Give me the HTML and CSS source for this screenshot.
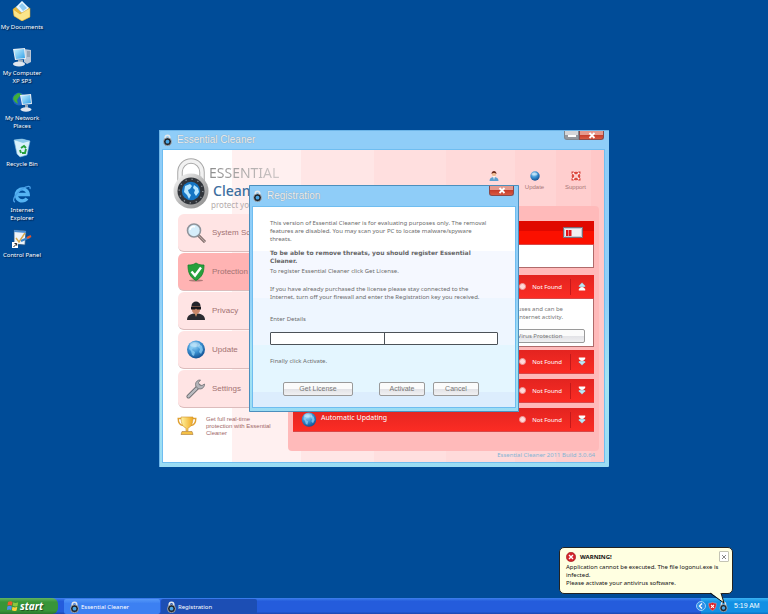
FILE: index.html
```html
<!DOCTYPE html>
<html lang="en">
<head>
<meta charset="utf-8">
<title>Desktop</title>
<link rel="stylesheet" href="styles.css">
</head>
<body>
<svg class="defs" aria-hidden="true">
  <defs>
    <linearGradient id="steel" x1="0" y1="0" x2="1" y2="1">
      <stop offset="0" stop-color="#fdfdfd"/><stop offset=".5" stop-color="#b9b9b9"/><stop offset="1" stop-color="#8a8a8a"/>
    </linearGradient>
    <radialGradient id="ball" cx=".4" cy=".3" r=".75">
      <stop offset="0" stop-color="#9fd8f8"/><stop offset=".5" stop-color="#3a8fd0"/><stop offset="1" stop-color="#0d4a8c"/>
    </radialGradient>
    <linearGradient id="screen" x1="0" y1="0" x2="1" y2="1">
      <stop offset="0" stop-color="#c8f2ff"/><stop offset="1" stop-color="#2f9fe8"/>
    </linearGradient>
    <linearGradient id="gold" x1="0" y1="0" x2="1" y2="0">
      <stop offset="0" stop-color="#fff3a0"/><stop offset="1" stop-color="#f0a820"/>
    </linearGradient>
    <symbol id="lock" viewBox="0 0 36 52">
      <path d="M7 28V14a11 11 0 0 1 22 0v14" fill="none" stroke="#a8a8a8" stroke-width="5.5"/>
      <path d="M7 28V14a11 11 0 0 1 22 0v14" fill="none" stroke="#f1f1f1" stroke-width="3.5"/>
      <circle cx="18" cy="33" r="17.5" fill="url(#steel)"/>
      <circle cx="18" cy="33" r="13.5" fill="#30343a"/>
      <circle cx="18" cy="33" r="11.8" fill="none" stroke="#8b9096" stroke-width="1.4" stroke-dasharray="1.2 5"/>
      <circle cx="18" cy="33" r="9.2" fill="#1676c4"/>
      <path d="M12 28l5-2 2 2-2 3-2 1 1 3 2 2-2 4-2-4-3-3zM21 27l4 3 1 4-3 4-2-3 1-3-2-2z" fill="#b5e6ff"/>
    </symbol>
    <symbol id="lock-small" viewBox="0 0 9 12">
      <path d="M2.200 6V3.500a2.300 2.300 0 0 1 4.600 0V6" fill="none" stroke="#e4e8ec" stroke-width="1.500"/>
      <circle cx="4.500" cy="7.700" r="4" fill="#20262e" stroke="#b9bec4" stroke-width=".8"/>
      <circle cx="4.500" cy="7.700" r="1.900" fill="#4aa6e6"/>
    </symbol>
    <symbol id="globe" viewBox="0 0 20 20">
      <circle cx="10" cy="9.500" r="9" fill="url(#ball)"/>
      <path d="M4 5l4-2 3 1-1 3-3 1-1 2 3 2-1 4-2-1-1-4-2-2zM13 4l3 2 1 4-2 4-2-2 1-3-2-2z" fill="#8fd0f5" opacity=".75"/>
      <ellipse cx="9" cy="4.500" rx="5" ry="2.500" fill="#fff" opacity=".35"/>
    </symbol>
    <symbol id="down" viewBox="0 0 10 10">
      <path d="M1 0h8v2L5 5.500 1 2z" fill="#fff"/><path d="M1 4.500h8v1.500L5 10 1 6z" fill="#b9e9f8" stroke="#8c3434" stroke-width=".3"/>
    </symbol>
    <symbol id="shield-x" viewBox="0 0 12 12">
      <path d="M6 .5c2 1 3.500 1 5 1 0 5-1 8-5 10C2 9.500 1 6.500 1 1.500c1.500 0 3 0 5-1z" fill="#d91f26" stroke="#f5b5b5" stroke-width=".6"/>
      <path d="M4 3.800l4 4M8 3.800l-4 4" stroke="#fff" stroke-width="1.500"/>
    </symbol>
  </defs>
</svg>

<main class="desktop">
  <nav class="shortcuts" aria-label="Desktop shortcuts">
    <a class="shortcut" href="#documents">
      <svg class="shortcut-icon" viewBox="0 0 20 20"><path d="M1 8l4-3 12 1 1 10-8 4-8-5z" fill="#e8b93c"/><path d="M4 6l6-6 7 7-5 7z" fill="#e9f6ff" stroke="#8dbbe0" stroke-width=".5"/><path d="M7 5l3-3 5 5-4 3z" fill="#8fcbf2"/><path d="M1 8l7 5 10-6v9l-8 4-8-5z" fill="#fbe58a" stroke="#d59c24" stroke-width=".5"/></svg>
      <span>My Documents</span>
    </a>
    <a class="shortcut" href="#computer">
      <svg class="shortcut-icon" viewBox="0 0 20 20"><path d="M12 2l7 1v12l-4 2-3-2z" fill="#b9c6d6"/><path d="M15 5h3M15 7h3M15 9h3" stroke="#5d7186" stroke-width=".8"/><path d="M1 2l12-1 1 11-11 1z" fill="#e8edf3"/><path d="M2 3l10-1 1 9-9 1z" fill="url(#screen)"/><path d="M6 13h5v2H6z" fill="#9aa9b8"/><ellipse cx="7" cy="17" rx="6" ry="2.500" fill="#dfe6ee"/></svg>
      <span>My Computer<br>XP SP3</span>
    </a>
    <a class="shortcut" href="#network">
      <svg class="shortcut-icon" viewBox="0 0 20 20"><circle cx="7" cy="7" r="6.500" fill="#1e62c0"/><path d="M2 4l4-3 4 1-3 3-2 3 1 4-3-2-2-3z" fill="#3fae3a"/><path d="M8 3l11-1 1 10-10 1z" fill="#e8edf3"/><path d="M9 4l9-1 1 8-8 1z" fill="url(#screen)"/><path d="M13 13h3v3h-3z" fill="#9aa9b8"/><ellipse cx="14" cy="17.500" rx="5.500" ry="2.200" fill="#dfe6ee"/></svg>
      <span>My Network<br>Places</span>
    </a>
    <a class="shortcut" href="#recycle">
      <svg class="shortcut-icon" viewBox="0 0 20 20"><path d="M2 2l8-1 8 2-3 14-7 2-3-3z" fill="#d9f1fb" stroke="#7cb6dc" stroke-width=".6"/><path d="M2 2l8-1 8 2-7 2z" fill="#8cc8ea"/><path d="M9 10l3-2 2 2M14 11l-1 4-3 0M9 15l-1-3" fill="none" stroke="#26a03a" stroke-width="1.900"/></svg>
      <span>Recycle Bin</span>
    </a>
    <a class="shortcut" href="#internet">
      <svg class="shortcut-icon" viewBox="0 0 20 20"><path d="M15 14.500A6 6 0 1 1 16.200 10.500H5" fill="none" stroke="#55b4f3" stroke-width="3.400"/><path d="M3 18c-4-1 1-9 7-13 5-3 9-4 8 0" fill="none" stroke="#4aa0e8" stroke-width="1.300"/></svg>
      <span>Internet<br>Explorer</span>
    </a>
    <a class="shortcut" href="#control">
      <svg class="shortcut-icon" viewBox="0 0 20 20"><path d="M2 1l12 1-1 14-11-1z" fill="#eef4fa" stroke="#27547f" stroke-width=".8"/><path d="M2 1l12 1v2L2 3z" fill="#4c8fd4"/><path d="M4 9l3 4 6-9" fill="none" stroke="#d9a94c" stroke-width="1.400"/><path d="M9 12l9-4" stroke="#3a83c8" stroke-width="2"/><path d="M15 9l4-2" stroke="#e0552c" stroke-width="2"/><path d="M0 13h6v6H0z" fill="#fff"/><path d="M1.500 18l3-3M2.500 14.500h2.200v2.200" fill="none" stroke="#111" stroke-width=".9"/></svg>
      <span>Control Panel</span>
    </a>
  </nav>

  <section class="window app-window" aria-label="Essential Cleaner">
    <header class="titlebar">
      <svg class="title-icon"><use href="#lock-small"/></svg>
      <h1 class="title">Essential Cleaner</h1>
      <div class="caption-buttons">
        <button class="caption minimize" aria-label="Minimize"><svg viewBox="0 0 14 9"><path d="M3 4h8v2H3z" fill="#fff"/></svg></button>
        <button class="caption close" aria-label="Close"><svg viewBox="0 0 14 9"><path d="M4.500 2l5 5M9.500 2l-5 5" stroke="#fff" stroke-width="1.800"/></svg></button>
      </div>
    </header>
    <div class="client app-client">
      <header class="app-header">
        <div class="brand">
          <svg class="brand-lock"><use href="#lock"/></svg>
          <div class="brand-text">
            <div class="brand-top">ESSENTIAL</div>
            <div class="brand-name">Cleaner</div>
            <div class="brand-tag">protect your</div>
          </div>
        </div>
        <nav class="tools" aria-label="Tools">
          <a class="tool" href="#register" aria-label="Register">
            <svg class="tool-icon" viewBox="0 0 10 10"><path d="M.5 10c0-3 2-4 4.500-4s4.500 1 4.500 4z" fill="#5ba0cf"/><path d="M4 5h2l-1 4z" fill="#fff"/><circle cx="5" cy="3" r="2.200" fill="#f0bd94"/><path d="M2.500 3c0-4 5-4 5 0-1-1.500-4-1.500-5 0z" fill="#6d2b1c"/></svg>
          </a>
          <a class="tool" href="#update"><svg class="tool-icon" viewBox="0 0 10 10"><circle cx="5" cy="5" r="4.700" fill="url(#ball)"/><ellipse cx="4.500" cy="3" rx="3" ry="1.600" fill="#fff" opacity=".45"/></svg><span>Update</span></a>
          <a class="tool" href="#support"><svg class="tool-icon" viewBox="0 0 10 10"><path d="M.5.5h2.500l-2.500 2.500zM9.500.5v2.500L7 .5zM.5 9.500V7L3 9.500zM9.500 9.500H7L9.500 7z" fill="#d8433a"/><circle cx="5" cy="5" r="3.200" fill="none" stroke="#dc4a40" stroke-width="2.200"/><path d="M2 2l1.600 1.600M8 2L6.400 3.600M2 8l1.600-1.600M8 8L6.400 6.400" stroke="#fff" stroke-width="1.300"/></svg><span>Support</span></a>
        </nav>
      </header>
      <div class="app-body">
        <aside class="sidebar">
          <nav class="menu" aria-label="Sections">
            <a class="menu-item" href="#scan"><svg class="menu-icon" viewBox="0 0 20 20"><path d="M12 12l7 7" stroke="#6d5a58" stroke-width="3"/><path d="M12 12l7 7" stroke="#b8a6a4" stroke-width="1.200"/><circle cx="8" cy="7.500" r="6.500" fill="#d6eefb" stroke="#8f949b" stroke-width="1.600"/><path d="M4 7c0-3 3-4 5-3" stroke="#fff" stroke-width="1.500" fill="none"/></svg><span>System Scan</span></a>
            <a class="menu-item active" href="#protection"><svg class="menu-icon" viewBox="0 0 20 20"><ellipse cx="10" cy="18.500" rx="7" ry="1" fill="#b07a78"/><path d="M10 1c3 2 5 2 8 2 0 8-2 12-8 15.500C4 15 2 11 2 3c3 0 5 0 8-2z" fill="#27a03c" stroke="#14802a" stroke-width=".8"/><path d="M5.500 9.500l3.500 4 6-8" fill="none" stroke="#fff" stroke-width="2.400"/></svg><span>Protection</span></a>
            <a class="menu-item" href="#privacy"><svg class="menu-icon" viewBox="0 0 20 20"><path d="M1 19c0-5 4-6.500 9-6.500s9 1.500 9 6.500z" fill="#2b2b30"/><path d="M8 11h4l-2 5z" fill="#c98d63"/><path d="M6 4h8v5c0 5-8 5-8 0z" fill="#c9876a"/><path d="M5.500 5c0-6 9-6 9 0z" fill="#23232a"/><path d="M5 5.500h10v3h-4l-1-1-1 1H5z" fill="#16161b"/></svg><span>Privacy</span></a>
            <a class="menu-item" href="#updates"><svg class="menu-icon"><use href="#globe"/></svg><span>Update</span></a>
            <a class="menu-item" href="#settings"><svg class="menu-icon" viewBox="0 0 20 20"><path d="M2.500 17.500L13 7" stroke="#6e6e72" stroke-width="4" stroke-linecap="round"/><path d="M2.500 17.500L13 7" stroke="#bcbcc0" stroke-width="2.400" stroke-linecap="round"/><path d="M18.500 5a4.500 4.500 0 1 1-4-4l-2 2.500 1 2.500 2.500.5z" fill="#b4b4b9" stroke="#6e6e72" stroke-width=".8"/></svg><span>Settings</span></a>
          </nav>
          <p class="promo">
            <svg class="promo-icon" viewBox="0 0 20 20"><path d="M4 2.500H1.200c0 4 1.500 6.500 5 7M16 2.500h2.800c0 4-1.500 6.500-5 7" fill="none" stroke="#e0a030" stroke-width="1.400"/><path d="M4 1h12c0 7-2 10-5 11v3H9v-3C6 11 4 8 4 1z" fill="url(#gold)" stroke="#d09028" stroke-width=".6"/><path d="M5 15.500h10l1 3H4z" fill="#f5c044" stroke="#a87838" stroke-width=".6"/></svg>
            <span>Get full real-time<br>protection with Essential<br>Cleaner</span>
          </p>
        </aside>
        <section class="panel" aria-label="Protection status">
          <article class="card summary">
            <div class="card-head"><svg class="gauge" viewBox="0 0 20 11"><path d="M.5.5h19v10H.5z" fill="#fff" stroke="#7c6d78"/><path d="M1.500 1.500h17v8h-17z" fill="#f2eef1" stroke="#c2cdd6"/><path d="M3 3h2.500v6H3zM6 3h2.500v6H6z" fill="#e3131a"/></svg></div>
            <div class="card-body"></div>
          </article>
          <article class="card open">
            <div class="card-head"><span class="status"><i class="dot"></i>Not Found</span><button class="toggle" aria-label="Collapse"><svg class="flip"><use href="#down"/></svg></button></div>
            <div class="card-body detail">
              <p>viruses and can be<br>Internet activity.</p>
              <button class="btn detail-button">Virus Protection</button>
            </div>
          </article>
          <article class="card"><div class="card-head"><span class="status"><i class="dot"></i>Not Found</span><button class="toggle" aria-label="Expand"><svg><use href="#down"/></svg></button></div></article>
          <article class="card"><div class="card-head"><span class="status"><i class="dot"></i>Not Found</span><button class="toggle" aria-label="Expand"><svg><use href="#down"/></svg></button></div></article>
          <article class="card"><div class="card-head"><svg class="head-icon"><use href="#globe"/></svg><h2 class="head-title">Automatic Updating</h2><span class="status"><i class="dot"></i>Not Found</span><button class="toggle" aria-label="Expand"><svg><use href="#down"/></svg></button></div></article>
        </section>
      </div>
      <footer class="build">Essential Cleaner 2011 Build 3.0.64</footer>
    </div>
  </section>

  <section class="window dialog" role="dialog" aria-label="Registration">
    <header class="titlebar">
      <svg class="title-icon"><use href="#lock-small"/></svg>
      <h1 class="title">Registration</h1>
      <div class="caption-buttons">
        <button class="caption close" aria-label="Close dialog"><svg viewBox="0 0 14 9"><path d="M4.500 2l5 5M9.500 2l-5 5" stroke="#fff" stroke-width="1.800"/></svg></button>
      </div>
    </header>
    <form class="client dialog-client">
      <p>This version of Essential Cleaner is for evaluating purposes only. The removal<br>features are disabled. You may scan your PC to locate malware/spyware<br>threats.</p>
      <p class="strong">To be able to remove threats, you should register Essential<br>Cleaner.</p>
      <p class="follow">To register Essential Cleaner click Get License.</p>
      <p class="wide-gap">If you have already purchased the license please stay connected to the<br>Internet, turn off your firewall and enter the Registration key you received.</p>
      <label class="details-label" for="name">Enter Details</label>
      <div class="fields">
        <input id="name" type="text">
        <input type="text" aria-label="Registration key">
      </div>
      <p class="final">Finally click Activate.</p>
      <div class="actions">
        <button class="btn license" type="button">Get License</button>
        <button class="btn small" type="button">Activate</button>
        <button class="btn small" type="button">Cancel</button>
      </div>
    </form>
  </section>

  <aside class="balloon" role="alert">
    <div class="balloon-head">
      <svg class="balloon-icon" viewBox="0 0 10 10"><circle cx="5" cy="5" r="4.700" fill="#d3232a" stroke="#8d1015" stroke-width=".5"/><path d="M3 3l4 4M7 3L3 7" stroke="#fff" stroke-width="1.400"/></svg>
      <strong>WARNING!</strong>
      <button class="balloon-close" aria-label="Dismiss"><svg viewBox="0 0 10 10"><path d="M2.500 2.500l5 5M7.500 2.500l-5 5" stroke="#777" stroke-width="1.100"/></svg></button>
    </div>
    <p>Application cannot be executed. The file logonui.exe is<br>infected.<br>Please activate your antivirus software.</p>
    <svg class="tail" viewBox="0 0 16 12"><path d="M1 0L15 11 12 0z" fill="#ffffe1"/><path d="M1 1L15 11 12 1" fill="none" stroke="#111" stroke-width="1"/></svg>
  </aside>
</main>

<footer class="taskbar">
  <button class="start"><svg class="flag" viewBox="0 0 12 12"><path d="M1 2c2-1 3-1 4.500 0L5 5.500C3.500 4.800 2.500 4.800.5 5.500z" fill="#ee5a2c"/><path d="M6.200 2.300c1.500.8 3 .8 5 0L10.500 6c-2 .8-3 .6-4.800-.3z" fill="#8cc63e"/><path d="M.3 6.500c2-1 3-1 4.500 0L4.200 10C2.700 9.200 1.700 9.300 0 10z" fill="#4d8df0"/><path d="M5.500 6.800c1.500.8 3 .8 4.800 0L9.600 10.400c-2 .8-3 .6-4.700-.2z" fill="#fccf3a"/></svg><span>start</span></button>
  <div class="tasks">
    <button class="task"><svg class="task-icon"><use href="#lock-small"/></svg>Essential Cleaner</button>
    <button class="task pressed"><svg class="task-icon"><use href="#lock-small"/></svg>Registration</button>
  </div>
  <div class="tray">
    <button class="tray-more" aria-label="Show hidden icons"><svg viewBox="0 0 8 8"><path d="M5 1.500L2.500 4 5 6.500" fill="none" stroke="#fff" stroke-width="1.300"/></svg></button>
    <svg class="tray-icon"><use href="#shield-x"/></svg>
    <svg class="tray-icon"><use href="#lock-small"/></svg>
    <time>5:19 AM</time>
  </div>
</footer>
</body>
</html>
```
FILE: styles.css
```css
:root {
  --ui: "Noto Sans", "Open Sans", sans-serif;
  --plain: "Liberation Sans", Arial, sans-serif;
}

* { box-sizing: border-box; }

body {
  margin: 0;
  height: 100vh;
  display: flex;
  flex-direction: column;
  overflow: hidden;
  background: #004c98;
  font: 6px/8px var(--ui);
  color: #777;
}

h1, h2, p { margin: 0; font: inherit; }
a { color: inherit; text-decoration: none; }
button { margin: 0; padding: 0; border: 0; font: inherit; color: inherit; background: none; }
svg { display: block; flex: none; }
.defs { position: absolute; width: 0; height: 0; }

/* Desktop */
.desktop { position: relative; z-index: 1; flex: 1; min-height: 0; }
.shortcuts { display: grid; grid-auto-rows: 1fr; width: 44px; height: 274px; }
.shortcut {
  display: flex;
  flex-direction: column;
  align-items: center;
  gap: 2px;
  padding-top: 1px;
  color: #fff;
  text-align: center;
  white-space: nowrap;
  text-shadow: 1px 1px 1px #001c40;
}
.shortcut-icon { width: 20px; height: 20px; }

/* Windows */
.window {
  position: absolute;
  padding: 0 4px 5px;
  display: flex;
  flex-direction: column;
  background: linear-gradient(#8fcdf8 0 10%, #92d0f7 50%, #a5e4f2 75%, #9adcf4);
  border-radius: 1px;
}
.app-window { left: 159px; top: 130px; width: 450px; padding-right: 5px; box-shadow: inset 1px 1px #6db5e8; }
.dialog { left: 249px; top: 185px; width: 270px; box-shadow: inset 0 0 0 1px #4c8fbd; }
.titlebar { display: flex; align-items: center; height: 20px; flex: none; }
.dialog .titlebar { height: 22px; }
.title-icon { width: 9px; height: 12px; }
.title {
  flex: 1;
  padding-left: 5px;
  font: 10px/18px var(--plain);
  color: #eceff2;
  text-shadow: 0 0 1px #75838f;
}
.caption-buttons { display: flex; align-self: flex-start; padding-top: 1px; }
.caption { height: 9px; border: 1px solid #8a4a4a; border-top: 0; display: grid; place-items: center; }
.caption svg { width: 14px; height: 9px; }
.minimize { width: 15px; border-color: #7f8790; border-radius: 0 0 0 3px; background: linear-gradient(#d5d5d8 50%, #96999f 50%); }
.close { width: 25px; border-radius: 0 0 3px 0; background: linear-gradient(#e59a8e 45%, #c53a28 45%, #d95a42); }
.dialog .caption-buttons { padding-right: 1px; }
.dialog .close { height: 10px; border-radius: 0 0 3px 3px; }
.client { outline: 1px solid #6fbdf0; }

/* Application */
.app-client {
  padding: 0 5px 0 10px;
  background: linear-gradient(90deg, #fff 0 69px, #fff0f0 69px 138px, #ffe6e6 138px 211px, #ffdfdf 211px 283px, #ffdada 283px 352px, #ffd4d4 352px 393px, #ffcece 393px 428px, #ffc8c8 428px);
}
.app-header { display: flex; justify-content: space-between; height: 56px; }
.brand { display: flex; align-items: flex-start; padding-top: 8px; }
.brand-lock { width: 36px; height: 52px; }
.brand-text { padding-top: 7px; }
.brand-top {
  font: 14px/16px var(--ui);
  color: transparent;
  background: linear-gradient(90deg, #8d8d8d, #cfc8c8);
  background-clip: text;
}
.brand-name { padding-left: 4px; font: 500 14px/20px var(--ui); color: #3d6f9f; }
.brand-tag { padding-left: 2px; font: 8px/8px var(--ui); color: #b4abab; }
.tools { display: flex; padding: 21px 3px 0 0; }
.tool {
  width: 41px;
  display: flex;
  flex-direction: column;
  align-items: center;
  gap: 2px;
  font: 6px/8px var(--plain);
  color: #a87878;
}
.tool-icon { width: 10px; height: 10px; }
.app-body { display: grid; grid-template-columns: 110px 1fr; align-items: start; margin-left: 5px; }
.menu { display: grid; gap: 1px; padding-top: 8px; }
.menu-item {
  height: 38px;
  display: flex;
  align-items: center;
  gap: 6px;
  padding-left: 8px;
  border-radius: 6px 0 0 6px;
  border-bottom: 1px solid #dcbcbc;
  background: #ffe4e4;
  font: 8px/10px var(--plain);
  color: #a37272;
}
.menu-item.active { background: #ffb3b3; }
.menu-icon { width: 20px; height: 20px; }
.promo {
  display: flex;
  gap: 9px;
  padding-top: 8px;
  margin-left: -1px;
  font: 6px/7px var(--plain);
  color: #a06868;
  white-space: nowrap;
}
.promo-icon { width: 20px; height: 20px; }

.panel {
  display: grid;
  gap: 5px;
  padding: 15px 5px 19px;
  border-radius: 4px;
  background: #ffbaba;
}
.card-head {
  display: flex;
  align-items: center;
  height: 24px;
  padding: 0 8px;
  color: #fff;
  background: linear-gradient(#e32420, #fb2c24);
  border-bottom: 1px solid #d84848;
}
.card-body { background: #fff; border: solid #b06a6a; border-width: 0 1px 1px 0; }
.summary { margin-bottom: 2px; }
.summary .card-head { justify-content: flex-end; padding-right: 11px; background: linear-gradient(#e00800 45%, #fb1000 45%); }
.summary .card-body { height: 23px; }
.open { margin-bottom: -2px; }
.gauge { width: 20px; height: 11px; }
.status { display: flex; align-items: center; gap: 6px; margin-left: auto; }
.dot { width: 7px; height: 7px; border-radius: 50%; background: #ffd9d9; border: 1px solid #ee9a9a; }
.toggle { width: 16px; height: 16px; margin-left: 8px; border-left: 1px solid #c4181a; display: grid; place-items: center end; }
.toggle svg { width: 8px; height: 9px; }
.flip { transform: rotate(180deg); }
.head-icon { width: 16px; height: 16px; }
.head-title { padding: 0 0 4px 4px; font: 7px/10px var(--ui); }
.detail { height: 48px; padding: 6px 8px 0 0; display: flex; flex-direction: column; align-items: flex-end; }
.detail p { padding-right: 22px; text-align: right; white-space: nowrap; }
.detail-button { width: 90px; margin-top: 8px; }

.build { height: 11px; padding-right: 4px; text-align: right; line-height: 8px; color: #83b4d4; }

.btn {
  height: 14px;
  border: 1px solid #9a9a9a;
  border-radius: 2px;
  background: linear-gradient(#fbfbfb 50%, #e2e2e6 50%, #f0f0f2);
  color: #777;
}

/* Registration dialog */
.dialog-client {
  height: 200px;
  padding: 12px 17px 0;
  background: linear-gradient(#fff 0 44px, #f5f8ff 44px 91px, #eef6ff 91px 138px, #e4f6ff 138px 185px, #dcedfd 185px);
  color: #6c6c6c;
  white-space: nowrap;
}
.strong { padding-top: 6px; font: 700 6px/8px "DejaVu Sans", sans-serif; color: #666; }
.follow { padding-top: 2px; }
.wide-gap { padding-top: 10px; }
.details-label { display: block; padding-top: 14px; }
.fields { display: grid; grid-template-columns: 1fr 1fr; margin: 9px 0 12px; border: 1px solid #4c5258; border-radius: 1px; background: #fff; }
.fields input { width: 100%; height: 11px; padding: 0 2px; border: 0; outline: 0; background: none; font: inherit; }
.fields input + input { border-left: 1px solid #4c5258; }
.actions { display: flex; gap: 8px; padding: 17px 0 0 13px; }
.small { width: 46px; font: 7px/8px var(--plain); }
.license { width: 70px; margin-right: 18px; font: 7px/8px var(--plain); }

/* Notification balloon */
.balloon {
  position: absolute;
  right: 35px;
  bottom: 4px;
  width: 174px;
  height: 47px;
  padding: 2px 3px 0 6px;
  border: 1px solid #222;
  border-radius: 5px;
  background: #ffffe1;
  color: #111;
  white-space: nowrap;
}
.balloon-head { display: flex; align-items: center; gap: 4px; height: 13px; }
.balloon-icon { width: 10px; height: 10px; }
.balloon-close { width: 10px; height: 11px; margin-left: auto; border: 1px solid #c4c4b4; border-radius: 1px; background: #fff; }
.tail { position: absolute; right: 7px; top: 44px; width: 16px; height: 12px; }

/* Taskbar */
.taskbar { display: flex; height: 16px; flex: none; background: linear-gradient(#3d80ee, #245cdc 20% 85%, #1c47ae); color: #fff; }
.start {
  display: flex;
  align-items: center;
  gap: 1px;
  width: 58px;
  padding-left: 7px;
  border-radius: 0 6px 6px 0;
  background: linear-gradient(#62b562, #389538 25% 80%, #2a752c);
  font: italic 700 10px/14px var(--ui);
  text-shadow: 1px 1px 1px #1c4a1c;
}
.flag { width: 12px; height: 12px; }
.tasks { display: flex; flex: 1; gap: 1px; padding: 1px 0 0 6px; }
.task { display: flex; align-items: center; gap: 2px; width: 96px; padding-left: 6px; border-radius: 2px; background: linear-gradient(#5598f8, #3c80f2 30%); text-align: left; }
.pressed { background: #1c4eb4; }
.task-icon { width: 9px; height: 12px; }
.tray { display: flex; align-items: center; gap: 2px; width: 67px; background: linear-gradient(#3cb4f4, #1290e4 25% 85%, #0d70c0); }
.tray-more { width: 10px; height: 10px; margin-left: -5px; border-radius: 50%; background: #2f8ee8; border: 1px solid #9bd0f8; display: grid; place-items: center; }
.tray-more svg { width: 8px; height: 8px; }
.tray-icon { width: 9px; height: 11px; }
.tray time { padding-left: 4px; font: 7px/10px var(--plain); }
```
